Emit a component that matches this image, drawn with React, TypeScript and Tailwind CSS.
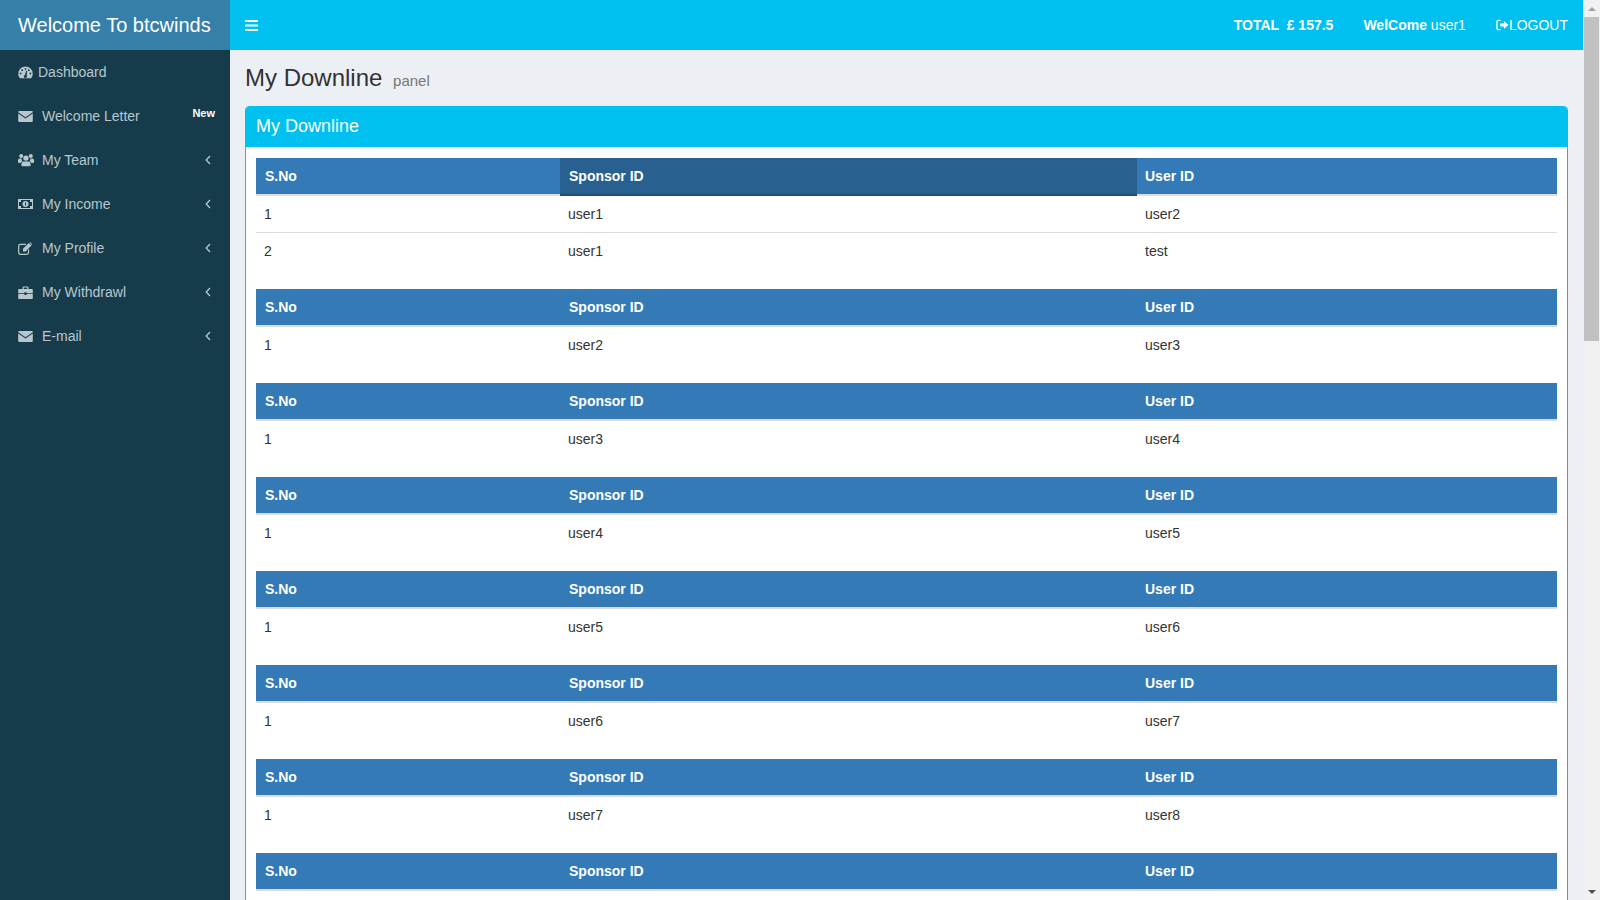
import React from 'react';

const bg = '#163c4c';

function DashIcon() {
  return (
    <svg width="15" height="13" viewBox="0 0 15 13" fill="currentColor">
      <path d="M7.5 0.5A7.2 7.2 0 0 0 0.3 7.7C0.3 9.3 0.8 10.8 1.7 12A0.8 0.8 0 0 0 2.3 12.3H12.7A0.8 0.8 0 0 0 13.3 12C14.2 10.8 14.7 9.3 14.7 7.7A7.2 7.2 0 0 0 7.5 0.5Z" />
      <g fill={bg}>
        <circle cx="7.5" cy="2.8" r="0.9" />
        <circle cx="4.2" cy="4.2" r="0.9" />
        <circle cx="2.6" cy="7.5" r="0.9" />
        <circle cx="12.4" cy="7.5" r="0.9" />
        <circle cx="10.8" cy="4.2" r="0.9" />
        <path d="M6.2 11.2L8.2 4.8L9.2 5L8.4 11.4Z" />
        <circle cx="7.3" cy="10.6" r="1.4" />
      </g>
    </svg>
  );
}

function MailIcon() {
  return (
    <svg width="15" height="11" viewBox="0 0 15 11" fill="currentColor">
      <path d="M0.2 1C0.2 0.5 0.6 0.1 1.2 0.1H13.8C14.4 0.1 14.8 0.5 14.8 1V1.3L7.5 6.2L0.2 1.3Z" />
      <path d="M0.2 2.6L7.5 7.4L14.8 2.6V10C14.8 10.5 14.4 10.9 13.8 10.9H1.2C0.6 10.9 0.2 10.5 0.2 10Z" />
    </svg>
  );
}

function TeamIcon() {
  return (
    <svg width="16" height="14" viewBox="0 0 16 13" fill="currentColor">
      <circle cx="3.2" cy="2.6" r="2" />
      <circle cx="12.8" cy="2.6" r="2" />
      <path d="M0 6.6C0 5.5 0.9 5 2 5H3.6C3.4 6 3.8 7.2 4.6 8C3.6 8.2 2.8 8.8 2.4 9.4H0.8C0.3 9.4 0 9 0 8.5Z" />
      <path d="M16 6.6C16 5.5 15.1 5 14 5H12.4C12.6 6 12.2 7.2 11.4 8C12.4 8.2 13.2 8.8 13.6 9.4H15.2C15.7 9.4 16 9 16 8.5Z" />
      <circle cx="8" cy="4.6" r="2.7" />
      <path d="M3.4 10.4C3.4 9 4.4 8 5.6 8H10.4C11.6 8 12.6 9 12.6 10.4V11.4C12.6 12.2 12 12.8 11.2 12.8H4.8C4 12.8 3.4 12.2 3.4 11.4Z" />
    </svg>
  );
}

function MoneyIcon() {
  return (
    <svg width="15" height="10" viewBox="0 0 15 10">
      <rect width="15" height="10" fill="currentColor" />
      <rect x="1" y="1" width="13" height="8" fill={bg} />
      <rect x="1" y="1" width="2" height="2" fill="currentColor" />
      <rect x="12" y="1" width="2" height="2" fill="currentColor" />
      <rect x="1" y="7" width="2" height="2" fill="currentColor" />
      <rect x="12" y="7" width="2" height="2" fill="currentColor" />
      <circle cx="7.5" cy="5" r="3" fill="currentColor" />
      <rect x="7" y="3.4" width="1" height="3.2" fill={bg} />
    </svg>
  );
}

function EditIcon() {
  return (
    <svg width="15" height="13" viewBox="0 0 15 13" fill="none">
      <path d="M10.5 7.5V10.5C10.5 11.5 9.8 12.3 8.8 12.3H2.4C1.4 12.3 0.7 11.5 0.7 10.5V4C0.7 3 1.4 2.3 2.4 2.3H8" stroke="currentColor" strokeWidth="1.2" />
      <path d="M5 6.8L10.8 1L13.4 3.6L7.6 9.4H5Z" fill="currentColor" />
      <path d="M11.5 0.4C11.8 0.1 12.2 0.1 12.5 0.4L14 1.9C14.3 2.2 14.3 2.6 14 2.9L13.8 3.1L11.3 0.6Z" fill="currentColor" />
    </svg>
  );
}

function CaseIcon() {
  return (
    <svg width="15" height="13" viewBox="0 0 15 13" fill="currentColor">
      <path d="M4.6 3V1.4C4.6 0.8 5 0.4 5.6 0.4H9.4C10 0.4 10.4 0.8 10.4 1.4V3H9.2V1.6H5.8V3Z" />
      <path d="M0.2 4C0.2 3.4 0.6 3 1.2 3H13.8C14.4 3 14.8 3.4 14.8 4V7H8.6V6.2H6.4V7H0.2Z" />
      <path d="M0.2 7.8H6.4V9H8.6V7.8H14.8V12C14.8 12.6 14.4 13 13.8 13H1.2C0.6 13 0.2 12.6 0.2 12Z" />
    </svg>
  );
}

function AngleIcon() {
  return (
    <svg width="6" height="10" viewBox="0 0 6 10" fill="none" className="ml-auto -mt-[1px]">
      <path d="M5 1L1.2 5L5 9" stroke="currentColor" strokeWidth="1.3" />
    </svg>
  );
}

const menu = [
  { label: 'Welcome Letter', icon: <MailIcon />, badge: true },
  { label: 'My Team', icon: <TeamIcon />, arrow: true },
  { label: 'My Income', icon: <MoneyIcon />, arrow: true },
  { label: 'My Profile', icon: <EditIcon />, arrow: true },
  { label: 'My Withdrawl', icon: <CaseIcon />, arrow: true },
  { label: 'E-mail', icon: <MailIcon />, arrow: true },
];

const tables: { rows: [string, string][]; hover?: boolean }[] = [
  { rows: [['user1', 'user2'], ['user1', 'test']], hover: true },
  { rows: [['user2', 'user3']] },
  { rows: [['user3', 'user4']] },
  { rows: [['user4', 'user5']] },
  { rows: [['user5', 'user6']] },
  { rows: [['user6', 'user7']] },
  { rows: [['user7', 'user8']] },
  { rows: [] },
];

function Sidebar() {
  return (
    <aside className="w-[230px] shrink-0 bg-[#163c4c] text-[#b8c7ce]">
      <div className="h-[50px] bg-[#367fa9] text-white text-[20px] leading-[50px] pl-[18px]">Welcome To btcwinds</div>
      <div className="h-[44px] flex items-center pl-[18px] gap-[5px]">
        <DashIcon />
        <span>Dashboard</span>
      </div>
      {menu.map((m) => (
        <div key={m.label} className="relative h-[44px] flex items-center pl-[18px] pr-[19px]">
          <span className="w-[24px] shrink-0 flex">{m.icon}</span>
          <span>{m.label}</span>
          {m.arrow && <AngleIcon />}
          {m.badge && <span className="absolute right-[15px] top-[11px] text-white text-[11px] font-bold leading-[16px]">New</span>}
        </div>
      ))}
    </aside>
  );
}

function Topbar() {
  return (
    <header className="h-[50px] shrink-0 bg-[#00c0ef] text-white flex items-center px-[15px]">
      <svg width="13" height="11" viewBox="0 0 13 11" fill="white">
        <rect width="13" height="2" rx="0.5" />
        <rect y="4.5" width="13" height="2" rx="0.5" />
        <rect y="9" width="13" height="2" rx="0.5" />
      </svg>
      <div className="ml-auto flex items-center">
        <b className="whitespace-pre">TOTAL  £ 157.5</b>
        <span className="ml-[30px]"><b>WelCome</b> user1</span>
        <span className="ml-[30px] flex items-center">
          <svg width="13" height="12" viewBox="0 0 14 12" fill="none">
            <path d="M5 1H2.5A1.5 1.5 0 0 0 1 2.5v7A1.5 1.5 0 0 0 2.5 11H5" stroke="white" strokeWidth="1.4" />
            <path d="M4.5 4.5H8.5V1.8L13.5 6L8.5 10.2V7.5H4.5Z" fill="white" />
          </svg>
          LOGOUT
        </span>
      </div>
    </header>
  );
}

function DownlineTable({ rows, hover }: { rows: [string, string][]; hover?: boolean }) {
  return (
    <table className="w-full table-fixed mb-5 border-separate border-spacing-0">
      <thead>
        <tr className="bg-[#337ab7] text-white text-left">
          <th className="w-[304px] h-[38px] px-[9px] border-b-2 border-[#dddddd]">S.No</th>
          <th className={hover ? 'w-[577px] h-[38px] px-[9px] bg-[#286090] border-b-2 border-[#204d74]' : 'w-[577px] h-[38px] px-[9px] border-b-2 border-[#dddddd]'}>Sponsor ID</th>
          <th className="h-[38px] px-[8px] border-b-2 border-[#dddddd]">User ID</th>
        </tr>
      </thead>
      <tbody>
        {rows.map((r, i) => {
          const cell = i > 0 ? 'h-[37px] px-[8px] border-t border-[#dddddd]' : 'h-[36px] px-[8px]';
          return (
            <tr key={i}>
              <td className={cell}>{i + 1}</td>
              <td className={cell}>{r[0]}</td>
              <td className={cell}>{r[1]}</td>
            </tr>
          );
        })}
      </tbody>
    </table>
  );
}

function Scrollbar() {
  return (
    <div className="w-[17px] shrink-0 bg-[#f1f1f1] flex flex-col items-center">
      <div className="h-[17px] flex items-center justify-center">
        <div className="w-0 h-0 border-x-[4px] border-x-transparent border-b-[4px] border-b-[#a3a3a3]" />
      </div>
      <div className="w-[15px] h-[324px] bg-[#c1c1c1]" />
      <div className="mt-auto h-[17px] flex items-center justify-center">
        <div className="w-0 h-0 border-x-[4px] border-x-transparent border-t-[4px] border-t-[#505050]" />
      </div>
    </div>
  );
}

export default function App() {
  return (
    <div className="h-screen flex overflow-hidden text-[14px] leading-[20px] text-[#333333] bg-[#ecf0f5]" style={{ fontFamily: '"Liberation Sans", Arial, sans-serif' }}>
      <Sidebar />
      <div className="flex-1 min-w-0 flex flex-col overflow-hidden">
        <Topbar />
        <main className="px-[15px] pt-[16px]">
          <h1 className="text-[24px] leading-[24px] h-[24px] mb-[16px]">
            My Downline <small className="text-[15px] text-[#777777] pl-[4px]">panel</small>
          </h1>
          <section className="bg-white border border-[#00c0ef] rounded-[4px]">
            <h3 className="bg-[#00c0ef] text-white text-[18px] leading-[20px] pt-[9px] pb-[11px] px-[10px] rounded-t-[3px]">My Downline</h3>
            <div className="p-[10px] pt-[11px]">
              {tables.map((t, i) => (
                <DownlineTable key={i} rows={t.rows} hover={t.hover} />
              ))}
            </div>
          </section>
        </main>
      </div>
      <Scrollbar />
    </div>
  );
}
